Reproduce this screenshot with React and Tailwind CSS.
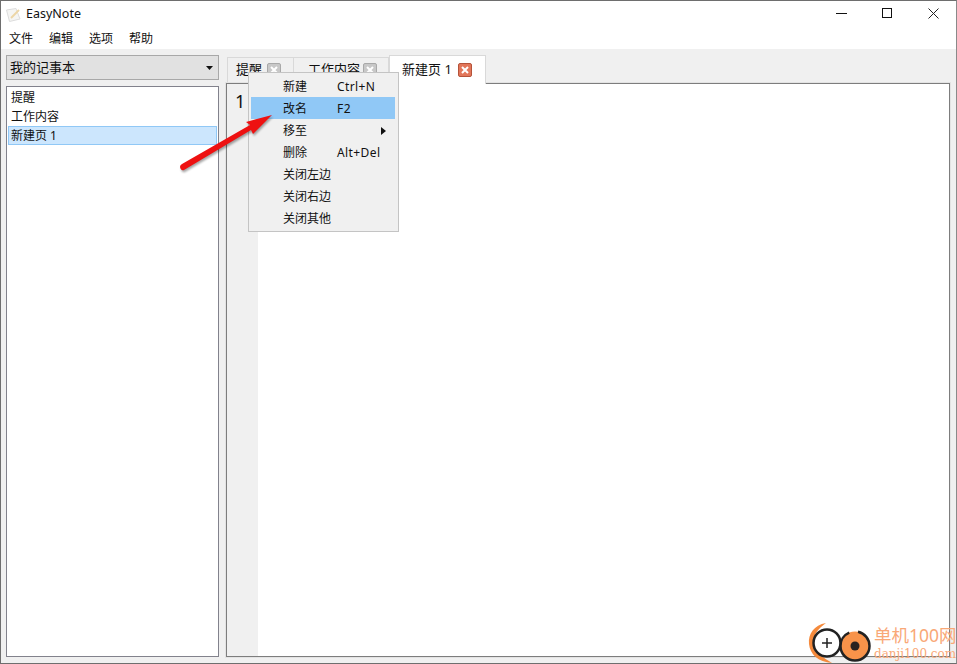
const font = { fontFamily: '"Noto Sans", "Noto Sans CJK SC", sans-serif' }

const CloseBox = ({ active }) => (
  <span
    className={
      active
        ? "flex h-[14px] w-[14px] items-center justify-center rounded-[2px] border border-[#b5533a] bg-[#e2765a]"
        : "flex h-[14px] w-[14px] items-center justify-center rounded-[2px] border border-[#a9a9a9] bg-[#c8c8c8]"
    }
  >
    <svg width="8" height="8" viewBox="0 0 8 8">
      <path d="M1 1L7 7M7 1L1 7" stroke="#fff" strokeWidth="2" />
    </svg>
  </span>
)

const menuItems = [
  { label: "新建", keys: "Ctrl+N" },
  { label: "改名", keys: "F2", active: true },
  { label: "移至", sub: true },
  { label: "删除", keys: "Alt+Del" },
  { label: "关闭左边" },
  { label: "关闭右边" },
  { label: "关闭其他" },
]

const ContextMenu = () => (
  <div className="absolute left-[247px] top-[71px] w-[151px] border border-[#c4c4c4] bg-[#f0f0f0] py-[2px] pl-[2px] pr-[3px] text-[12px] text-[#111]">
    {menuItems.map((item) => (
      <div
        key={item.label}
        className={`flex h-[22px] items-center pl-[32px] pt-[2px] ${item.active ? "bg-[#90c8f6]" : ""}`}
      >
        <span className="w-[54px]">{item.label}</span>
        <span className="tracking-[0.4px]">{item.keys}</span>
        {item.sub && (
          <svg className="ml-[44px]" width="5" height="8" viewBox="0 0 5 8">
            <path d="M0 0L5 4L0 8Z" fill="#111" />
          </svg>
        )}
      </div>
    ))}
  </div>
)

const arrowPath = "M5 62Q5 60 7 59L75 20L71 17L97 10L78 29L76 25L9 65Q6 66 5 62Z"

const Arrow = () => (
  <svg className="absolute left-[174px] top-[104px]" width="105" height="72" viewBox="0 0 105 72">
    <path d={arrowPath} fill="#000" opacity="0.35" transform="translate(1 2)" className="blur-[1px]" />
    <path d={arrowPath} fill="#ee1111" />
  </svg>
)

const Watermark = () => (
  <div className="absolute left-[807px] top-[621px] flex h-[42px] w-[149px] items-center whitespace-nowrap">
    <svg className="shrink-0" width="66" height="42" viewBox="0 0 66 42">
      <path d="M18 1C6 3 0 12 1 22C2 32 10 40 24 41C16 36 7 31 6 21C5 12 11 6 18 1Z" fill="#f58a3c" />
      <circle cx="19" cy="21" r="13.5" fill="#fff" stroke="#222" strokeWidth="2.5" />
      <path d="M14 21H24M19 16V26" stroke="#222" strokeWidth="1.5" />
      <circle cx="47" cy="24" r="14.5" fill="#f8934a" stroke="#222" strokeWidth="2.5" strokeDasharray="62 9" />
      <circle cx="47" cy="24" r="4.5" fill="#2a2320" />
    </svg>
    <div className="flex flex-col text-[#f9a877]">
      <span className="text-[17.5px] leading-[18px]">单机100网</span>
      <span className="mt-[3px] text-[12px] leading-[14px]" style={{ fontFamily: '"DejaVu Serif", serif' }}>danji100.com</span>
    </div>
  </div>
)

export default function App() {
  return (
    <div style={font} className="relative flex h-[664px] w-[957px] flex-col overflow-hidden border border-[#6e6e6e] border-r-[#8a8a8a] bg-[#f0f0f0] text-[12px] text-[#111]">
      <div className="bg-white">
        <div className="flex h-[27px] items-center">
          <svg className="ml-[5px]" width="15" height="14" viewBox="0 0 15 14">
            <path d="M0.5 2L10 0.5L14 11L3.5 13.5Z" fill="#f5f5f3" stroke="#dcdcdc" />
            <path d="M5 10L13 2" stroke="#ecd6a6" strokeWidth="2" />
          </svg>
          <span className="ml-[5px] text-[12.5px]">EasyNote</span>
          <div className="-mt-[3px] ml-auto flex items-center">
            <div className="mr-[35px] h-px w-[11px] bg-[#111]" />
            <div className="mr-[36px] h-[10px] w-[10px] border border-[#111]" />
            <svg className="mr-[17px]" width="11" height="11" viewBox="0 0 11 11">
              <path d="M0.5 0.5L10.5 10.5M10.5 0.5L0.5 10.5" stroke="#222" />
            </svg>
          </div>
        </div>
        <div className="flex h-[21px] gap-[16px] pl-[8px] pt-[2px]">
          <span>文件</span>
          <span>编辑</span>
          <span>选项</span>
          <span>帮助</span>
        </div>
      </div>

      <div className="flex min-h-0 flex-1 pl-[5px] pr-[6px] pt-[6px]">
        <div className="flex w-[213px] flex-col pb-[6px]">
          <div className="flex h-[25px] items-center justify-between border border-[#a8a8a8] bg-[#e1e1e1] pl-[3px] pr-[5px] text-[13px]">
            <span>我的记事本</span>
            <svg width="7" height="4" viewBox="0 0 7 4">
              <path d="M0 0H7L3.5 4Z" fill="#111" />
            </svg>
          </div>
          <div className="mt-[6px] flex-1 border border-[#82828c] bg-white p-px">
            <div className="h-[19px] pl-[3px] leading-[19px]">提醒</div>
            <div className="h-[19px] pl-[3px] leading-[19px]">工作内容</div>
            <div className="h-[19px] border border-[#90c8f6] bg-[#cce6fd] pl-[2px] leading-[17px]">新建页 1</div>
          </div>
        </div>

        <div className="ml-[7px] flex flex-1 flex-col">
          <div className="flex h-[28px] items-end pl-[1px]">
            <div className="flex h-[26px] w-[67px] items-center border border-b-0 border-[#d9d9d9] bg-[#f0f0f0] pb-[1px] pl-[8px] text-[13px]">
              <span>提醒</span>
              <span className="ml-[5px]"><CloseBox /></span>
            </div>
            <div className="flex h-[26px] w-[95px] items-center border border-b-0 border-l-0 border-[#d9d9d9] bg-[#f0f0f0] pb-[1px] pl-[14px] text-[13px]">
              <span>工作内容</span>
              <span className="ml-[3px]"><CloseBox /></span>
            </div>
            <div className="relative -mb-px flex h-[29px] w-[97px] items-center border border-b-0 border-[#d9d9d9] bg-white pb-[1px] pl-[12px] text-[13px]">
              <span>新建页 1</span>
              <span className="ml-[6px]"><CloseBox active /></span>
            </div>
          </div>
          <div className="flex flex-1 border border-[#7d7d7d] bg-white outline outline-1 outline-[#e3e3e3]">
            <div className="w-[31px] bg-[#f0f0f0] pl-[8px] pt-[5px] text-[18px] leading-[24px]">1</div>
            <div className="flex-1 bg-white" />
          </div>
          <div className="h-[6px]" />
        </div>
      </div>

      <ContextMenu />
      <Arrow />
      <Watermark />
    </div>
  )
}
